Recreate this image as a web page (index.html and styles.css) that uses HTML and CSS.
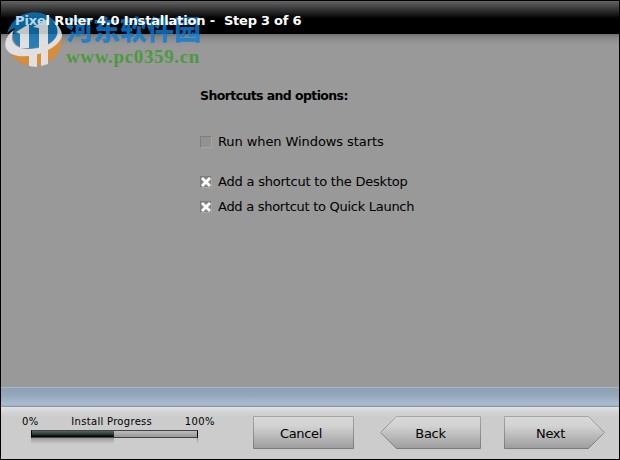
FILE: index.html
```html
<!DOCTYPE html>
<html lang="en">

<head>
    <meta charset="UTF-8">
    <meta name="viewport" content="width=device-width, initial-scale=1.0">
    <title>Pixel Ruler 4.0 Installation</title>
    <link rel="stylesheet" href="styles.css">
</head>

<body>
    <div class="window">
        <header class="titlebar">
            <h1><span class="app"><span class="tint">Pixe</span>l Ruler 4.0 Installation -</span><span class="step">Step 3 of 6</span></h1>
        </header>

        <main class="content">
            <h2>Shortcuts and options:</h2>
            <div class="option first">
                <span class="box"></span>
                <span class="run">Run when Windows starts</span>
            </div>
            <div class="option">
                <span class="box checked"><svg width="12" height="12" viewBox="0 0 12 12"><path d="M3 3l6 6M9 3l-6 6"/></svg></span>
                <span class="desk">Add a shortcut to the Desktop</span>
            </div>
            <div class="option">
                <span class="box checked"><svg width="12" height="12" viewBox="0 0 12 12"><path d="M3 3l6 6M9 3l-6 6"/></svg></span>
                <span class="quick">Add a shortcut to Quick Launch</span>
            </div>
        </main>

        <div class="band"></div>

        <footer class="footer">
            <div class="progress">
                <div class="labels">
                    <span>0%</span>
                    <span class="name">Install Progress</span>
                    <span>100%</span>
                </div>
                <div class="bar"><div class="fill"></div></div>
                <div class="shadow"></div>
            </div>
            <button class="btn cancel">
                <svg width="101" height="33" viewBox="0 0 101 33">
                    <defs>
                        <linearGradient id="face" x1="0" y1="0" x2="0" y2="1">
                            <stop offset="0" stop-color="#d9d9d9"/>
                            <stop offset=".3" stop-color="#d2d2d2"/>
                            <stop offset="1" stop-color="#9d9d9d"/>
                        </linearGradient>
                        <linearGradient id="edge" x1="0" y1="0" x2="0" y2="1">
                            <stop offset="0" stop-color="#a6a6a6"/>
                            <stop offset="1" stop-color="#7c7c7c"/>
                        </linearGradient>
                    </defs>
                    <path d="M.5.5h100v32H.5z"/>
                </svg>
                <span>Cancel</span>
            </button>
            <button class="btn back">
                <svg width="101" height="33" viewBox="0 0 101 33"><path d="M.5 16.5l16-16h84v32h-84z"/></svg>
                <span>Back</span>
            </button>
            <button class="btn next">
                <svg width="101" height="33" viewBox="0 0 101 33"><path d="M.5.5h84l16 16-16 16H.5z"/></svg>
                <span>Next</span>
            </button>
        </footer>

        <!-- site watermark over the top left corner -->
        <div class="watermark">
            <svg class="logo" width="58" height="58" viewBox="0 0 58 58">
                <path class="blue" d="M2 24A28 28 0 0 1 54 17C55 27 46 36 30 38 17 40 9 36 8 27 8 23 9 20 10 18 5 20 3 22 2 24z"/>
                <path class="orange" d="M6 44C24 49 46 42 57 27A28 28 0 0 1 6 44z"/>
                <path class="white" d="M9 20C1 25-2 35 2 40 8 49 28 47 39 42 49 38 56 31 57 26 57 21 54 15 48 11 54 18 54 25 48 31 42 37 32 39 24 39 12 39 7 34 7 28 7 25 8 22 9 20z"/>
                <path class="white" d="M11 22l13-8v24h-9V24zM28 17l15-8v26l-9 4V18zM24 44h8v13l-8-1zM36 42l7-3v15l-7 2z"/>
            </svg>
            <div class="site">
                <div class="cn">河东软件园</div>
                <div class="url">www.pc0359.cn</div>
            </div>
        </div>
    </div>
</body>

</html>
```

FILE: styles.css
```css
* {
    box-sizing: border-box;
}

body {
    margin: 0;
    font-family: Verdana, "DejaVu Sans", sans-serif;
    font-size: 13px;
    color: #000;
}

.window {
    position: relative;
    display: flex;
    flex-direction: column;
    width: 620px;
    height: 460px;
    border: 1px solid #000;
    background: #999;
    overflow: hidden;
}

.titlebar {
    height: 33px;
    padding: 11px 0 0 14px;
    background: linear-gradient(#636363 0, #484848 5px, #202020 12px, #030303 17px, #000 18px);
}

h1 {
    position: relative;
    z-index: 1;
    display: flex;
    margin: 0;
    font-size: 13px;
    line-height: 17px;
    letter-spacing: -0.15px;
    color: #fff;
    white-space: pre;
}

.app {
    width: 209px;
}

.tint {
    color: #b5daf0;
}

.step {
    letter-spacing: -0.25px;
}

.content {
    flex: 1;
    padding: 53px 0 0 199px;
    background: linear-gradient(#707070 0, #858585 3px, #949494 8px, #999 12px);
}

h2 {
    margin: 0 0 29px;
    font-size: 12.5px;
    line-height: 17px;
    letter-spacing: -0.6px;
}

.option {
    display: flex;
    align-items: center;
    gap: 6px;
    height: 17px;
    margin-bottom: 8px;
    white-space: nowrap;
}

.option.first {
    margin-bottom: 23px;
}

.run {
    letter-spacing: -0.08px;
}

.desk {
    letter-spacing: -0.21px;
}

.quick {
    letter-spacing: -0.28px;
}

.box {
    width: 12px;
    height: 12px;
    border: 1px solid;
    border-color: #7d7d7d #a5a5a5 #a5a5a5 #7d7d7d;
    background: #929292;
}

.box.checked {
    background: #858585;
}

.box svg {
    display: block;
    margin: -1px;
    fill: none;
    stroke: #fff;
    stroke-width: 2.8;
    stroke-linecap: square;
}

.band {
    height: 20px;
    border-top: 1px solid #a9b8c7;
    border-bottom: 1px solid #8795a5;
    background: linear-gradient(#8fa1b5, #94a6ba 40%, #aabdd3 90%, #a0b1c5);
}

.footer {
    display: flex;
    height: 52px;
    background: linear-gradient(#e2e2e2, #d4d4d4 5px, #ccc 10px, #ccc);
}

.progress {
    width: 197px;
    margin: 8px 34px 0 21px;
}

.labels {
    display: flex;
    justify-content: space-between;
    width: 193px;
    font-size: 10px;
    line-height: 13px;
    letter-spacing: 0.4px;
}

.name {
    letter-spacing: 0.3px;
}

.bar {
    width: 167px;
    height: 8px;
    margin: 2px 0 0 9px;
    border: 1px solid #000;
    border-top-color: #444;
    border-bottom-color: #444;
    background: linear-gradient(#bcbcbc, #989898);
}

.fill {
    width: 82px;
    height: 6px;
    background: linear-gradient(#526360, #35433f 45%, #121a18 75%, #000);
}

/* reflection under the bar, with the thin right edge */
.shadow {
    width: 167px;
    height: 6px;
    margin-left: 9px;
    background:
        linear-gradient(#999, #ccc) 0 0 / 83px 6px no-repeat,
        linear-gradient(#888, #ccc) 100% 0 / 1px 6px no-repeat;
}

.btn {
    position: relative;
    width: 101px;
    height: 33px;
    margin: 9px 0 0;
    padding: 0;
    border: 0;
    background: none;
    font: inherit;
    letter-spacing: -0.3px;
}

.btn svg {
    display: block;
    fill: url(#face);
    stroke: url(#edge);
}

.btn span {
    position: absolute;
    inset: 0;
    line-height: 35px;
}

.cancel span {
    right: 5px;
}

.back {
    margin-left: 26px;
}

.next {
    margin-left: 23px;
}

.next span {
    right: 8px;
}

.watermark {
    position: absolute;
    left: 4px;
    top: 9px;
    display: flex;
}

.logo {
    opacity: 0.82;
}

.blue {
    fill: #1278bc;
}

.orange {
    fill: #ea8a22;
}

.white {
    fill: #f0f0f0;
}

.site {
    margin: 4px 0 0 3px;
    white-space: nowrap;
}

.cn {
    font: 900 27px/30px "Noto Sans CJK SC", sans-serif;
    color: rgba(12, 125, 215, 0.82);
}

.url {
    margin-top: 2px;
    font: bold 19px/22px "Liberation Serif", serif;
    letter-spacing: 0.65px;
    color: rgba(60, 155, 45, 0.85);
}
```
